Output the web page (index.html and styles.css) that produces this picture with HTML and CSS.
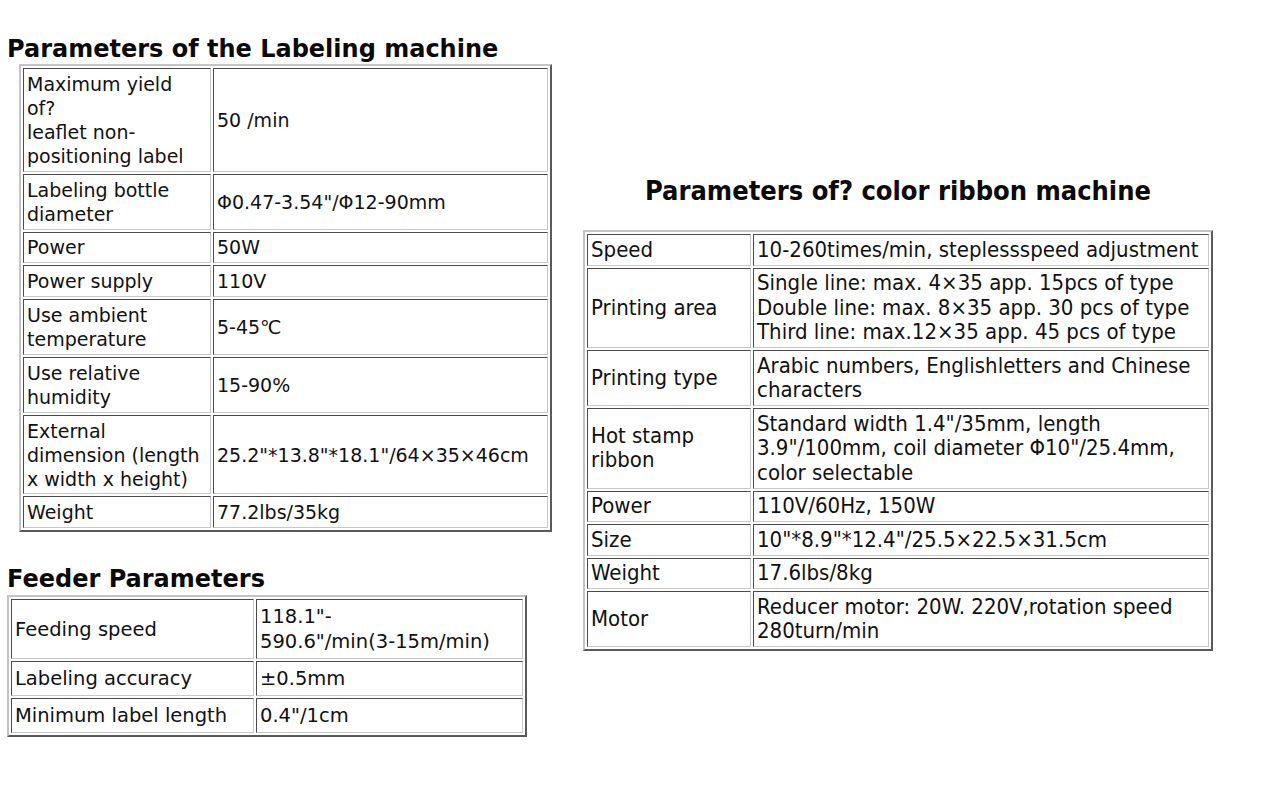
FILE: index.html
```html
<!DOCTYPE html>
<html>
<head>
<meta charset="utf-8">
<title>Parameters</title>
<link rel="stylesheet" href="styles.css">
</head>
<body>
<div class="page">
  <div class="left">
    <h2 class="title">Parameters of the Labeling machine</h2>
    <table class="grid t1">
      <tr><td class="k">Maximum yield<br>of?<br>leaflet non-<br>positioning label</td><td>50 /min</td></tr>
      <tr><td class="k">Labeling bottle<br>diameter</td><td>Φ0.47-3.54"/Φ12-90mm</td></tr>
      <tr><td class="k">Power</td><td>50W</td></tr>
      <tr><td class="k">Power supply</td><td>110V</td></tr>
      <tr><td class="k">Use ambient<br>temperature</td><td>5-45℃</td></tr>
      <tr><td class="k">Use relative<br>humidity</td><td>15-90%</td></tr>
      <tr><td class="k">External<br>dimension (length<br>x width x height)</td><td>25.2"*13.8"*18.1"/64×35×46cm</td></tr>
      <tr><td class="k">Weight</td><td>77.2lbs/35kg</td></tr>
    </table>
    <h2 class="title feeder">Feeder Parameters</h2>
    <table class="grid t2">
      <tr><td class="k">Feeding speed</td><td>118.1"-<br>590.6"/min(3-15m/min)</td></tr>
      <tr><td class="k">Labeling accuracy</td><td>±0.5mm</td></tr>
      <tr><td class="k">Minimum label length</td><td>0.4"/1cm</td></tr>
    </table>
  </div>
  <div class="right">
    <h2 class="title-r">Parameters of? color ribbon machine</h2>
    <table class="grid t3">
      <tr><td class="k">Speed</td><td>10-260times/min, steplessspeed adjustment</td></tr>
      <tr><td class="k">Printing area</td><td>Single line: max. 4×35 app. 15pcs of type<br>Double line: max. 8×35 app. 30 pcs of type<br>Third line: max.12×35 app. 45 pcs of type</td></tr>
      <tr><td class="k">Printing type</td><td>Arabic numbers, Englishletters and Chinese<br>characters</td></tr>
      <tr><td class="k">Hot stamp<br>ribbon</td><td>Standard width 1.4"/35mm, length<br>3.9"/100mm, coil diameter Φ10"/25.4mm,<br>color selectable</td></tr>
      <tr><td class="k">Power</td><td>110V/60Hz, 150W</td></tr>
      <tr><td class="k">Size</td><td>10"*8.9"*12.4"/25.5×22.5×31.5cm</td></tr>
      <tr><td class="k">Weight</td><td>17.6lbs/8kg</td></tr>
      <tr><td class="k">Motor</td><td>Reducer motor: 20W. 220V,rotation speed<br>280turn/min</td></tr>
    </table>
  </div>
</div>
</body>
</html>
```

FILE: styles.css
```css
html, body {
  margin: 0;
  padding: 0;
  background: #ffffff;
  color: #111111;
  font-family: "DejaVu Sans", Verdana, sans-serif;
}

.page {
  display: flex;
  align-items: flex-start;
  padding-left: 7px;
}

.left {
  width: 544px;
  padding-top: 34px;
}

.title {
  margin: 0;
  font-family: "DejaVu Sans", Verdana, sans-serif;
  font-weight: bold;
  font-size: 24px;
  line-height: 30px;
  color: #0a0a0a;
  white-space: nowrap;
}

.title.feeder {
  margin-top: 32px;
}

.grid {
  border-collapse: separate;
  border-spacing: 2px;
  border-style: solid;
  border-width: 2px;
  border-color: #c4c4c4 #5a5a5a #5a5a5a #c4c4c4;
  table-layout: fixed;
}

.grid td {
  box-sizing: border-box;
  border-style: solid;
  border-width: 1px;
  border-color: #4a4a4a #c8c8c8 #c8c8c8 #4a4a4a;
  padding: 2.5px 3px;
  vertical-align: middle;
  white-space: nowrap;
  text-align: left;
}

.t1 {
  margin-left: 12px;
  width: 533px;
  font-size: 19px;
  line-height: 24px;
}

.t1 td {
  padding: 2.9px 3px;
}

.t1 td.k {
  width: 188px;
}

.t2 {
  margin-top: 1px;
  width: 520px;
  font-size: 19.5px;
  line-height: 25px;
}

.t2 td {
  padding: 4px 3px;
}

.t2 td.k {
  width: 243px;
}

.right {
  margin-left: 32px;
  width: 630px;
  padding-top: 175px;
}

.title-r {
  margin: 0 0 23px 0;
  font-family: "DejaVu Sans Condensed", "DejaVu Sans", Tahoma, sans-serif;
  font-weight: bold;
  font-size: 27px;
  line-height: 32px;
  text-align: center;
  color: #0a0a0a;
  white-space: nowrap;
}

.t3 {
  width: 630px;
  font-family: "DejaVu Sans Condensed", "DejaVu Sans", Tahoma, sans-serif;
  font-size: 22px;
  line-height: 24.5px;
}

.t3 td.k {
  width: 164px;
}
```
